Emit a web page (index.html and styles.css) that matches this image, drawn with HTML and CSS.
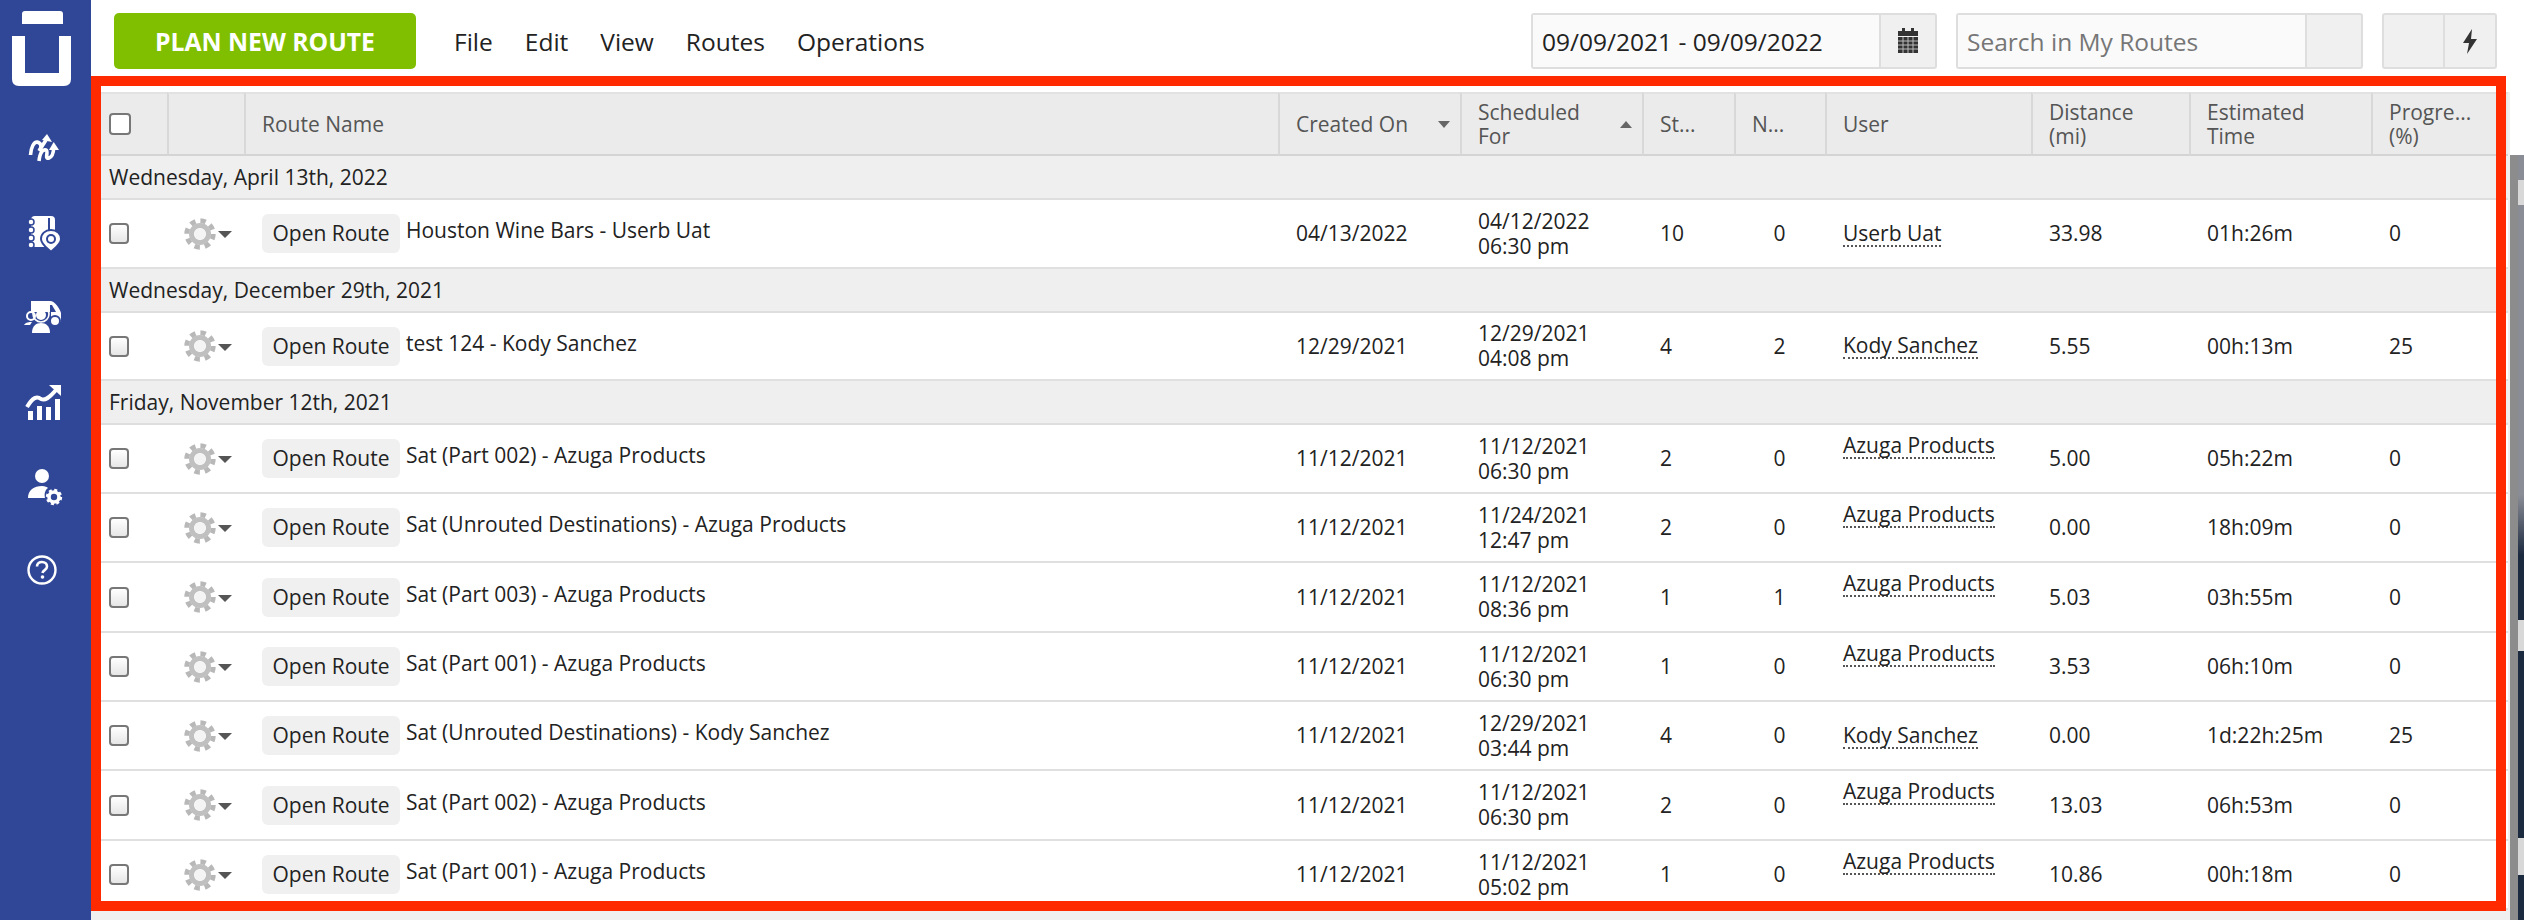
FILE: index.html
```html
<!DOCTYPE html>
<html lang="en">
<head>
    <meta charset="UTF-8">
    <title>My Routes</title>
    <link rel="stylesheet" href="styles.css">
</head>
<body>

    <svg class="defs" width="0" height="0">
        <symbol id="gear" viewBox="0 0 32 32">
            <circle cx="16" cy="16" r="13.2" fill="none" stroke="#b8b8b8" stroke-width="5" stroke-dasharray="5.4 4.97"/>
            <circle cx="16" cy="16" r="8.5" fill="none" stroke="#c0c0c0" stroke-width="5"/>
            <circle cx="16" cy="16" r="5.6" fill="#f4f4f4"/>
        </symbol>
    </svg>

    <aside class="sidebar">
        <svg class="logo" viewBox="0 0 60 76">
            <path d="M13 0H48Q51 0 51 3V13H10V3Q10 0 13 0Z" fill="#fff"/>
            <path d="M0 25H13V62H47V25H59V68Q59 75 52 75H7Q0 75 0 68Z" fill="#fff"/>
        </svg>
        <nav class="side-nav">
            <a class="side-item">
                <svg viewBox="0 0 40 40" fill="none" stroke="#fff" stroke-width="3.6">
                    <path d="M7.5 26C8 18 11 13 14 13C18 14 19 17 17 21"/>
                    <path d="M16 22L23 11"/>
                    <path d="M16 32C17 23 20 20 23 21C26 22 21 31 26 29C29 28 30.5 23 30.7 19"/>
                    <path d="M24 5L29 13L19 11Z" fill="#fff" stroke="none"/>
                    <path d="M30.7 13L36 21H26Z" fill="#fff" stroke="none"/>
                </svg>
            </a>
            <a class="side-item">
                <svg viewBox="0 0 40 40">
                    <rect x="8" y="3" width="24" height="31" rx="4" fill="#fff"/>
                    <rect x="25" y="5" width="2" height="13" fill="#304797"/>
                    <g fill="#fff" stroke="#304797" stroke-width="1.5">
                        <circle cx="8" cy="9" r="3"/>
                        <circle cx="8" cy="17" r="3"/>
                        <circle cx="8" cy="25" r="3"/>
                        <circle cx="8" cy="32" r="3"/>
                    </g>
                    <path d="M28 17C22 17 18 21 18 26C18 31 24 35 28 39C32 35 38 31 38 26C38 21 34 17 28 17Z" fill="#fff" stroke="#304797" stroke-width="2"/>
                    <circle cx="28" cy="26" r="5" fill="#304797"/>
                    <circle cx="28" cy="26" r="3" fill="#fff"/>
                </svg>
            </a>
            <a class="side-item">
                <svg viewBox="0 0 40 40">
                    <path d="M8 4H27C32 4 37 12 38 16V25H28V15H8Z" fill="#fff"/>
                    <path d="M27 8H29L33 15H27Z" fill="#304797"/>
                    <circle cx="32" cy="24" r="5" fill="#fff" stroke="#304797" stroke-width="2"/>
                    <circle cx="18" cy="17" r="8" fill="none" stroke="#fff" stroke-width="1.6"/>
                    <circle cx="18" cy="18" r="5" fill="#fff"/>
                    <circle cx="8" cy="19" r="4" fill="none" stroke="#fff" stroke-width="2"/>
                    <path d="M1 28C3 25 6 25 9 25L7 28Z" fill="#fff"/>
                    <path d="M9 36C9 29 13 26 18 26C23 26 27 29 27 36Z" fill="#fff"/>
                </svg>
            </a>
            <a class="side-item">
                <svg viewBox="0 0 40 40">
                    <rect x="5" y="29" width="5" height="9" fill="#fff"/>
                    <rect x="14" y="24" width="5" height="14" fill="#fff"/>
                    <rect x="23" y="25" width="5" height="13" fill="#fff"/>
                    <rect x="32" y="17" width="5" height="21" fill="#fff"/>
                    <path d="M4 25C10 15 14 14 18 17C22 19 26 16 33 8" fill="none" stroke="#fff" stroke-width="4"/>
                    <path d="M26 3H38V14Z" fill="#fff"/>
                </svg>
            </a>
            <a class="side-item">
                <svg viewBox="0 0 40 40">
                    <circle cx="19" cy="10" r="7" fill="#fff"/>
                    <path d="M5 32C5 24 11 20 19 20C22 20 24 21 25 22C22 24 21 28 22 32Z" fill="#fff"/>
                    <circle cx="31" cy="31" r="5" fill="none" stroke="#fff" stroke-width="3.6"/>
                    <circle cx="31" cy="31" r="7" fill="none" stroke="#fff" stroke-width="2.4" stroke-dasharray="3 2.5"/>
                </svg>
            </a>
            <a class="side-item">
                <svg viewBox="0 0 40 40">
                    <circle cx="19" cy="20" r="13.5" fill="none" stroke="#fff" stroke-width="2.4"/>
                    <path d="M14 16.5C14 13.5 16.5 12 19 12C22 12 24 14 24 16.5C24 20 20 20 19.5 23" fill="none" stroke="#fff" stroke-width="2.6"/>
                    <circle cx="19.5" cy="27" r="1.8" fill="#fff"/>
                </svg>
            </a>
        </nav>
    </aside>

    <main class="content">
        <header class="topbar">
            <button class="btn-plan">PLAN NEW ROUTE</button>
            <nav class="menu">
                <a>File</a>
                <a>Edit</a>
                <a>View</a>
                <a>Routes</a>
                <a>Operations</a>
            </nav>
            <div class="field field-date">
                <input type="text" value="09/09/2021 - 09/09/2022">
                <span class="addon">
                    <svg width="20" height="26" viewBox="0 0 20 26">
                        <rect x="4" y="0" width="3" height="5" fill="#333"/>
                        <rect x="13" y="0" width="3" height="5" fill="#333"/>
                        <rect x="0" y="3" width="20" height="5" fill="#333"/>
                        <rect x="0" y="9" width="20" height="16" fill="#333"/>
                        <path d="M0 13H20M0 17H20M0 21H20M5 9V25M10 9V25M15 9V25" stroke="#bbb" stroke-width="1"/>
                    </svg>
                </span>
            </div>
            <div class="field field-search">
                <input type="text" placeholder="Search in My Routes">
                <span class="addon"></span>
            </div>
            <div class="field field-tools">
                <span class="addon addon-blank"></span>
                <span class="addon addon-bolt">
                    <svg width="16" height="25" viewBox="0 0 16 25">
                        <path d="M10 0L1 14H7L5 25L15 10H9Z" fill="#333"/>
                    </svg>
                </span>
            </div>
        </header>

        <table class="routes">
            <colgroup>
                <col class="c-check"><col class="c-gear"><col class="c-name"><col class="c-date"><col class="c-date">
                <col class="c-num"><col class="c-notes"><col class="c-user"><col class="c-dist"><col class="c-date"><col>
            </colgroup>
            <thead>
                <tr>
                    <th class="cell-check"><input type="checkbox" class="check check-head"></th>
                    <th></th>
                    <th>Route Name</th>
                    <th><div class="sort">Created On<i class="caret-down"></i></div></th>
                    <th><div class="sort">Scheduled<br>For<i class="caret-up"></i></div></th>
                    <th>St...</th>
                    <th>N...</th>
                    <th>User</th>
                    <th>Distance<br>(mi)</th>
                    <th>Estimated<br>Time</th>
                    <th>Progre...<br>(%)</th>
                </tr>
            </thead>
            <tbody>
                <tr class="group"><td colspan="11">Wednesday, April 13th, 2022</td></tr>
                <tr>
                    <td class="cell-check"><input type="checkbox" class="check"></td>
                    <td class="cell-gear"><div class="gear-menu"><svg width="32" height="32"><use href="#gear"/></svg><i class="caret-menu"></i></div></td>
                    <td class="cell-name"><div class="name-wrap"><span class="btn-open">Open Route</span><span class="route-title">Houston Wine Bars - Userb Uat</span></div></td>
                    <td>04/13/2022</td>
                    <td>04/12/2022<br>06:30 pm</td>
                    <td>10</td>
                    <td class="center">0</td>
                    <td><span class="user">Userb Uat</span></td>
                    <td>33.98</td>
                    <td>01h:26m</td>
                    <td>0</td>
                </tr>
                <tr class="group"><td colspan="11">Wednesday, December 29th, 2021</td></tr>
                <tr class="row-first">
                    <td class="cell-check"><input type="checkbox" class="check"></td>
                    <td class="cell-gear"><div class="gear-menu"><svg width="32" height="32"><use href="#gear"/></svg><i class="caret-menu"></i></div></td>
                    <td class="cell-name"><div class="name-wrap"><span class="btn-open">Open Route</span><span class="route-title">test 124 - Kody Sanchez</span></div></td>
                    <td>12/29/2021</td>
                    <td>12/29/2021<br>04:08 pm</td>
                    <td>4</td>
                    <td class="center">2</td>
                    <td><span class="user">Kody Sanchez</span></td>
                    <td>5.55</td>
                    <td>00h:13m</td>
                    <td>25</td>
                </tr>
                <tr class="group"><td colspan="11">Friday, November 12th, 2021</td></tr>
                <tr>
                    <td class="cell-check"><input type="checkbox" class="check"></td>
                    <td class="cell-gear"><div class="gear-menu"><svg width="32" height="32"><use href="#gear"/></svg><i class="caret-menu"></i></div></td>
                    <td class="cell-name"><div class="name-wrap"><span class="btn-open">Open Route</span><span class="route-title">Sat (Part 002) - Azuga Products</span></div></td>
                    <td>11/12/2021</td>
                    <td>11/12/2021<br>06:30 pm</td>
                    <td>2</td>
                    <td class="center">0</td>
                    <td><span class="user user-wrapped">Azuga Products</span></td>
                    <td>5.00</td>
                    <td>05h:22m</td>
                    <td>0</td>
                </tr>
                <tr>
                    <td class="cell-check"><input type="checkbox" class="check"></td>
                    <td class="cell-gear"><div class="gear-menu"><svg width="32" height="32"><use href="#gear"/></svg><i class="caret-menu"></i></div></td>
                    <td class="cell-name"><div class="name-wrap"><span class="btn-open">Open Route</span><span class="route-title">Sat (Unrouted Destinations) - Azuga Products</span></div></td>
                    <td>11/12/2021</td>
                    <td>11/24/2021<br>12:47 pm</td>
                    <td>2</td>
                    <td class="center">0</td>
                    <td><span class="user user-wrapped">Azuga Products</span></td>
                    <td>0.00</td>
                    <td>18h:09m</td>
                    <td>0</td>
                </tr>
                <tr class="row-tall">
                    <td class="cell-check"><input type="checkbox" class="check"></td>
                    <td class="cell-gear"><div class="gear-menu"><svg width="32" height="32"><use href="#gear"/></svg><i class="caret-menu"></i></div></td>
                    <td class="cell-name"><div class="name-wrap"><span class="btn-open">Open Route</span><span class="route-title">Sat (Part 003) - Azuga Products</span></div></td>
                    <td>11/12/2021</td>
                    <td>11/12/2021<br>08:36 pm</td>
                    <td>1</td>
                    <td class="center">1</td>
                    <td><span class="user user-wrapped">Azuga Products</span></td>
                    <td>5.03</td>
                    <td>03h:55m</td>
                    <td>0</td>
                </tr>
                <tr>
                    <td class="cell-check"><input type="checkbox" class="check"></td>
                    <td class="cell-gear"><div class="gear-menu"><svg width="32" height="32"><use href="#gear"/></svg><i class="caret-menu"></i></div></td>
                    <td class="cell-name"><div class="name-wrap"><span class="btn-open">Open Route</span><span class="route-title">Sat (Part 001) - Azuga Products</span></div></td>
                    <td>11/12/2021</td>
                    <td>11/12/2021<br>06:30 pm</td>
                    <td>1</td>
                    <td class="center">0</td>
                    <td><span class="user user-wrapped">Azuga Products</span></td>
                    <td>3.53</td>
                    <td>06h:10m</td>
                    <td>0</td>
                </tr>
                <tr>
                    <td class="cell-check"><input type="checkbox" class="check"></td>
                    <td class="cell-gear"><div class="gear-menu"><svg width="32" height="32"><use href="#gear"/></svg><i class="caret-menu"></i></div></td>
                    <td class="cell-name"><div class="name-wrap"><span class="btn-open">Open Route</span><span class="route-title">Sat (Unrouted Destinations) - Kody Sanchez</span></div></td>
                    <td>11/12/2021</td>
                    <td>12/29/2021<br>03:44 pm</td>
                    <td>4</td>
                    <td class="center">0</td>
                    <td><span class="user">Kody Sanchez</span></td>
                    <td>0.00</td>
                    <td>1d:22h:25m</td>
                    <td>25</td>
                </tr>
                <tr class="row-tall">
                    <td class="cell-check"><input type="checkbox" class="check"></td>
                    <td class="cell-gear"><div class="gear-menu"><svg width="32" height="32"><use href="#gear"/></svg><i class="caret-menu"></i></div></td>
                    <td class="cell-name"><div class="name-wrap"><span class="btn-open">Open Route</span><span class="route-title">Sat (Part 002) - Azuga Products</span></div></td>
                    <td>11/12/2021</td>
                    <td>11/12/2021<br>06:30 pm</td>
                    <td>2</td>
                    <td class="center">0</td>
                    <td><span class="user user-wrapped">Azuga Products</span></td>
                    <td>13.03</td>
                    <td>06h:53m</td>
                    <td>0</td>
                </tr>
                <tr>
                    <td class="cell-check"><input type="checkbox" class="check"></td>
                    <td class="cell-gear"><div class="gear-menu"><svg width="32" height="32"><use href="#gear"/></svg><i class="caret-menu"></i></div></td>
                    <td class="cell-name"><div class="name-wrap"><span class="btn-open">Open Route</span><span class="route-title">Sat (Part 001) - Azuga Products</span></div></td>
                    <td>11/12/2021</td>
                    <td>11/12/2021<br>05:02 pm</td>
                    <td>1</td>
                    <td class="center">0</td>
                    <td><span class="user user-wrapped">Azuga Products</span></td>
                    <td>10.86</td>
                    <td>00h:18m</td>
                    <td>0</td>
                </tr>
            </tbody>
        </table>

        <div class="highlight"></div>
    </main>

    <div class="scrollbar"></div>
    <div class="behind">
        <span class="band band-a"></span>
        <span class="band band-b"></span>
        <span class="band band-c"></span>
    </div>

</body>
</html>
```

FILE: styles.css
```css
* {
    box-sizing: border-box;
    margin: 0;
    padding: 0;
    font-family: "Open Sans", "Liberation Sans", sans-serif;
}

body {
    display: flex;
    width: 2524px;
    height: 920px;
    overflow: hidden;
    background: white;
    color: #222;
}

.defs {
    position: absolute;
}

/* left bar */
.sidebar {
    width: 91px;
    flex-shrink: 0;
    background: #304797;
    padding-top: 11px;
}

.logo {
    display: block;
    width: 60px;
    height: 76px;
    margin-left: 12px;
}

.side-nav {
    display: flex;
    flex-direction: column;
    margin-top: 20px;
}

.side-item {
    display: flex;
    align-items: center;
    justify-content: center;
    height: 84.2px;
    padding-right: 6px;
}

.side-item svg {
    width: 40px;
    height: 40px;
}

/* main area */
.content {
    position: relative;
    width: 2419px;
    flex-shrink: 0;
    background: #f0f0f0;
}

.topbar {
    display: flex;
    align-items: center;
    height: 92px;
    padding: 0 13px 10px 23px;
    background: white;
}

.btn-plan {
    width: 302px;
    height: 56px;
    background: #7fbf00;
    border: none;
    border-radius: 5px;
    color: white;
    font-size: 24.7px;
    font-weight: 700;
}

.menu {
    display: flex;
    gap: 32px;
    margin-left: 38px;
    font-size: 24.5px;
    color: #222;
}

.field {
    display: flex;
    height: 56px;
    border: 2px solid #dedede;
    border-radius: 3px;
    background: #f0f0f0;
}

.field input {
    height: 100%;
    padding: 0 9px;
    border: none;
    outline: none;
    background: #fafafa;
    font-size: 24.5px;
    color: #222;
}

.field input::placeholder {
    color: #767676;
    opacity: 1;
}

.addon {
    display: flex;
    align-items: center;
    justify-content: center;
    width: 56px;
    border-left: 2px solid #dedede;
}

.field-date {
    width: 406px;
    margin-left: auto;
}

.field-date input {
    width: 348px;
}

.field-search {
    width: 407px;
    margin-left: 19px;
}

.field-search input {
    width: 349px;
}

.field-tools {
    width: 115px;
    margin-left: 19px;
}

.addon-blank {
    width: 60px;
    border-left: none;
}

.addon-bolt {
    width: 53px;
}

/* routes table */
.routes {
    width: 2407px;
    margin-left: 10px;
    border-collapse: separate;
    border-spacing: 0;
    table-layout: fixed;
    font-size: 21px;
    background: white;
}

.c-check { width: 66px; }
.c-gear { width: 77px; }
.c-name { width: 1034px; }
.c-date { width: 182px; }
.c-num { width: 92px; }
.c-notes { width: 91px; }
.c-user { width: 206px; }
.c-dist { width: 158px; }

.routes th {
    height: 64px;
    padding: 0 16px;
    background: #ebebeb;
    border-top: 2px solid #e2e2e2;
    border-left: 2px solid #d8d8d8;
    border-bottom: 2px solid #d4d4d4;
    text-align: left;
    font-weight: 400;
    line-height: 24px;
    color: #555;
}

.routes th:first-child {
    border-left: none;
}

.routes td {
    height: 69px;
    padding: 0 18px;
    border-bottom: 2px solid #e0e0e0;
    line-height: 25px;
}

.routes .row-first td {
    height: 68px;
}

.routes .row-tall td {
    height: 70px;
}

.routes .group td {
    height: 44px;
    padding: 0 8px;
    background: #efefef;
    border-bottom: 2px solid #dedede;
    color: #222;
}

.routes .center {
    text-align: center;
}

.routes .cell-check {
    padding: 0 0 0 8px;
}

.check {
    display: block;
    width: 20px;
    height: 21px;
    appearance: none;
    background: linear-gradient(#ffffff, #e6e6e6);
    border: 2px solid #777;
    border-radius: 4px;
}

.check-head {
    width: 22px;
    height: 22px;
    background: white;
}

.routes .cell-gear {
    padding: 0 0 0 17px;
}

.gear-menu {
    display: flex;
    align-items: center;
    gap: 2px;
}

.caret-menu {
    width: 0;
    height: 0;
    margin-top: 2px;
    border-left: 7px solid transparent;
    border-right: 7px solid transparent;
    border-top: 7px solid #555;
}

.sort {
    position: relative;
}

.caret-down,
.caret-up {
    position: absolute;
    top: 50%;
    right: -6px;
    width: 0;
    height: 0;
    margin-top: -3px;
    border-left: 6px solid transparent;
    border-right: 6px solid transparent;
}

.caret-down {
    border-top: 7px solid #666;
}

.caret-up {
    border-bottom: 7px solid #666;
}

.routes .cell-name {
    padding: 0;
}

.name-wrap {
    display: flex;
    align-items: center;
    padding-left: 18px;
}

.btn-open {
    width: 138px;
    height: 39px;
    line-height: 39px;
    text-align: center;
    background: #f0f0f0;
    border-radius: 6px;
    color: #222;
}

.route-title {
    margin: 0 0 6px 6px;
}

.user {
    display: inline-block;
    line-height: 24px;
    border-bottom: 2px dotted #555;
}

.user-wrapped {
    display: table;
    margin-bottom: 26px;
}

/* annotation frame */
.highlight {
    position: absolute;
    top: 76px;
    left: 0;
    width: 2415px;
    height: 835px;
    border: 10px solid #ff2a00;
}

/* what shows at the window edge */
.scrollbar {
    width: 8px;
    flex-shrink: 0;
    margin-top: 155px;
    background: #8c8c8c;
}

.behind {
    position: relative;
    flex: 1;
    margin-top: 155px;
    background: linear-gradient(#8a8d96 0, #8a8d96 340px, #1c2a40 400px);
}

.band {
    position: absolute;
    left: 0;
    width: 100%;
    background: #d8d8d8;
}

.band-a {
    top: 25px;
    height: 25px;
}

.band-b {
    top: 465px;
    height: 31px;
}

.band-c {
    top: 683px;
    height: 37px;
}
```
